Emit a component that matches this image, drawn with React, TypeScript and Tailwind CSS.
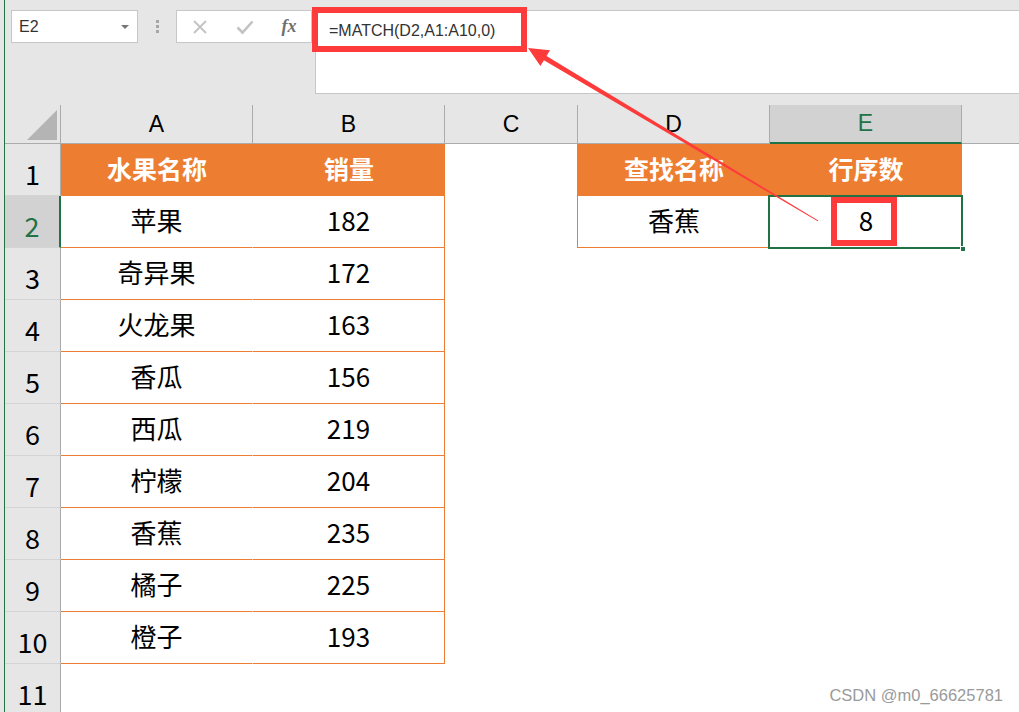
import React from 'react';

// 表格數據
const fruits: [string, number][] = [
  ['苹果', 182],
  ['奇异果', 172],
  ['火龙果', 163],
  ['香瓜', 156],
  ['西瓜', 219],
  ['柠檬', 204],
  ['香蕉', 235],
  ['橘子', 225],
  ['橙子', 193],
];

const cjk = "font-['Noto_Sans_CJK_SC',sans-serif]";

const RowHead: React.FC<{ n: number; active?: boolean }> = ({ n, active }) => (
  <div
    className={`w-[56px] shrink-0 flex justify-center items-start pt-[16px] border-b border-b-[#d4d4d4] text-[27px] leading-none ${cjk} ${
      active
        ? 'bg-[#d2d2d2] border-r-2 border-r-[#217346] text-[#217346]'
        : 'bg-[#e6e6e6] border-r border-r-[#ababab] text-black'
    }`}
  >
    {n}
  </div>
);

const Cell: React.FC<{ cls: string; children?: React.ReactNode }> = ({ cls, children }) => (
  <div className={`shrink-0 h-full flex items-center justify-center pb-[4px] leading-none ${cjk} ${cls}`}>{children}</div>
);

const XIcon = () => (
  <svg width="16" height="16" viewBox="0 0 16 16">
    <path d="M2 2 L14 14 M14 2 L2 14" stroke="#c2c2c2" strokeWidth="1.8" fill="none" />
  </svg>
);

const CheckIcon = () => (
  <svg width="18" height="16" viewBox="0 0 18 16">
    <path d="M1.5 8.5 L6.5 13.5 L16.5 2.5" stroke="#c2c2c2" strokeWidth="2.6" fill="none" />
  </svg>
);

export default function App() {
  return (
    <div className="relative w-[1019px] h-[712px] overflow-hidden bg-white flex">
      {/* 左側邊框 */}
      <div className="w-[4px] shrink-0 bg-[#e6e6e6]" />
      <div className="w-[1px] shrink-0 bg-[#217346]" />

      <div className="flex-1 flex flex-col min-w-0">
        {/* 編輯欄 */}
        <div className="h-[105px] shrink-0 bg-[#e6e6e6] flex items-start pt-[10px]">
          <div className="ml-[6px] w-[127px] h-[33px] shrink-0 bg-white border border-[#c6c6c6] flex items-center justify-between pl-[7px] pr-[8px]">
            <span className="font-['Liberation_Sans',sans-serif] text-[16px] text-[#333]">E2</span>
            <span className="w-0 h-0 border-l-[4px] border-r-[4px] border-t-[4px] border-l-transparent border-r-transparent border-t-[#777]" />
          </div>
          <div className="w-[38px] h-[33px] shrink-0 flex flex-col items-center justify-center gap-[2px]">
            <span className="w-[3px] h-[3px] bg-[#a6a6a6]" />
            <span className="w-[3px] h-[3px] bg-[#a6a6a6]" />
            <span className="w-[3px] h-[3px] bg-[#a6a6a6]" />
          </div>
          <div className="w-[136px] h-[33px] shrink-0 bg-white border border-[#c6c6c6] flex items-center">
            <div className="w-[46px] flex justify-center"><XIcon /></div>
            <div className="w-[44px] flex justify-center"><CheckIcon /></div>
            <div className="w-[44px] flex justify-center font-['Liberation_Serif',serif] italic font-bold text-[18px] text-[#707070]">fx</div>
          </div>
          <div className="ml-[3px] flex-1 h-[84px] bg-white border-l border-t border-b border-[#c6c6c6] pl-[13px] pt-[7px]">
            <span className="font-['Liberation_Sans',sans-serif] text-[16px] text-[#333]">=MATCH(D2,A1:A10,0)</span>
          </div>
        </div>

        {/* 欄標題 */}
        <div className="h-[39px] shrink-0 flex bg-[#e6e6e6] text-[23px] font-['Liberation_Sans',sans-serif]">
          <div className="w-[56px] shrink-0 border-r border-b border-[#ababab] relative">
            <svg className="absolute left-0 top-0" width="56" height="39" viewBox="0 0 56 39">
              <polygon points="52,5 52,35 22,35" fill="#b4b4b4" />
            </svg>
          </div>
          <div className="w-[192px] shrink-0 border-r border-b border-[#ababab] flex items-center justify-center">A</div>
          <div className="w-[192px] shrink-0 border-r border-b border-[#ababab] flex items-center justify-center">B</div>
          <div className="w-[133px] shrink-0 border-r border-b border-[#ababab] flex items-center justify-center">C</div>
          <div className="w-[192px] shrink-0 border-r border-b border-[#ababab] flex items-center justify-center">D</div>
          <div className="w-[192px] shrink-0 border-r border-r-[#ababab] border-b-2 border-b-[#217346] bg-[#d2d2d2] text-[#217346] flex items-center justify-center">E</div>
          <div className="flex-1 border-b border-[#ababab]" />
        </div>

        {/* 第 1 列：表頭 */}
        <div className="flex h-[52px] shrink-0">
          <RowHead n={1} />
          <Cell cls="w-[192px] bg-[#ed7d31] text-white font-bold text-[25px]">水果名称</Cell>
          <Cell cls="w-[192px] bg-[#ed7d31] text-white font-bold text-[25px]">销量</Cell>
          <Cell cls="w-[133px] border-r border-r-[#ed7d31]" />
          <Cell cls="w-[192px] bg-[#ed7d31] text-white font-bold text-[25px]">查找名称</Cell>
          <Cell cls="w-[192px] bg-[#ed7d31] text-white font-bold text-[25px]">行序数</Cell>
          <div className="flex-1" />
        </div>

        {/* 數據列 */}
        {fruits.map(([name, qty], i) => {
          const row = i + 2;
          return (
            <div key={name} className="flex h-[52px] shrink-0">
              <RowHead n={row} active={row === 2} />
              <Cell cls="w-[192px] border-r border-r-white border-b border-b-[#ed7d31] text-[26px] text-black">{name}</Cell>
              <Cell cls="w-[192px] border-r border-r-[#ed7d31] border-b border-b-[#ed7d31] text-[26px] text-black">{qty}</Cell>
              <Cell cls={`w-[133px] border-r ${row === 2 ? 'border-r-[#ed7d31]' : 'border-r-white'}`} />
              {row === 2 ? (
                <>
                  <Cell cls="w-[192px] border-b border-b-[#ed7d31] text-[26px] text-black">香蕉</Cell>
                  <div className="relative w-[192px] shrink-0 h-full flex items-center justify-center pb-[4px]">
                    <div className="absolute left-[-2px] top-[-1px] w-[195px] h-[54px] border-2 border-[#217346]" />
                    <div className="absolute right-[-4px] bottom-[-4px] w-[6px] h-[6px] bg-[#217346] border border-white" />
                    <div className="absolute left-[61px] top-[1px] w-[66px] h-[49px] border-[6px] border-[#fe3b3b]" />
                    <span className={`relative text-[26px] leading-none text-black ${cjk}`}>8</span>
                  </div>
                </>
              ) : (
                <div className="w-[384px] shrink-0" />
              )}
              <div className="flex-1" />
            </div>
          );
        })}

        {/* 第 11 列 */}
        <div className="flex h-[52px] shrink-0">
          <RowHead n={11} />
          <div className="flex-1" />
        </div>
      </div>

      {/* 標註：公式紅框 */}
      <div className="absolute left-[312px] top-[7px] w-[215px] h-[45px] border-[6px] border-[#fe3b3b] pointer-events-none" />

      {/* 標註：紅色箭頭 */}
      <svg className="absolute left-0 top-0 pointer-events-none" width="1019" height="712" viewBox="0 0 1019 712">
        <polygon
          points="528,48 550,50.3 546.5,56.1 818.2,220.6 817.7,221.3 543.9,60.3 540.4,66.1"
          fill="#fe3b3b"
        />
      </svg>

      {/* 浮水印 */}
      <div className="absolute right-[16px] bottom-[9px] font-['Liberation_Sans',sans-serif] text-[16.5px] text-[#9a9a9a] leading-none">
        CSDN @m0_66625781
      </div>
    </div>
  );
}
